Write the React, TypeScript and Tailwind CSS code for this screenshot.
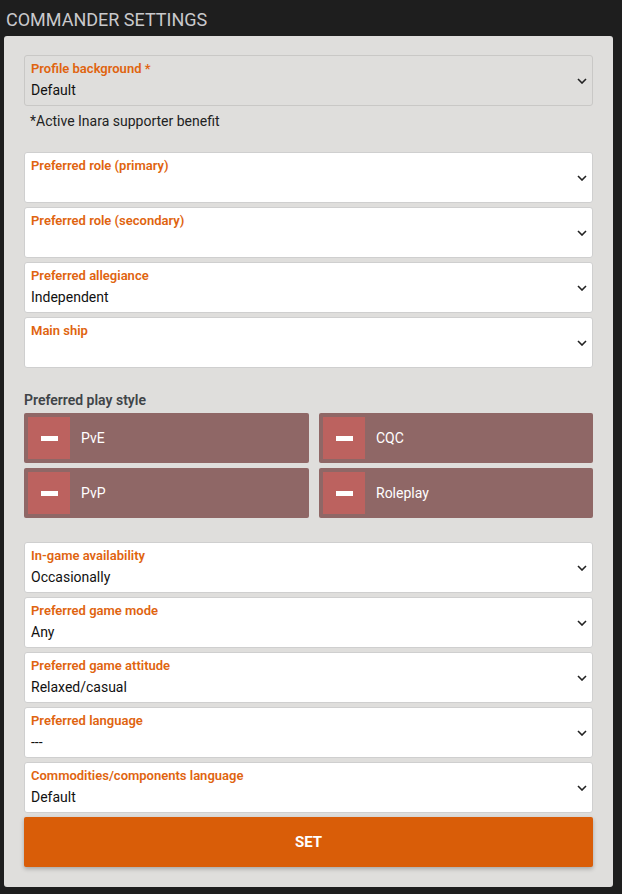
import React from 'react';

const Chevron = () => (
  <svg width="10" height="6" viewBox="0 0 10 6" className="shrink-0">
    <path d="M1 1l4 4 4-4" fill="none" stroke="#222" strokeWidth="1.6" />
  </svg>
);

type FieldProps = { label: string; value?: string; disabled?: boolean };

const SelectField = ({ label, value, disabled }: FieldProps) => (
  <div
    className={`h-[51px] rounded-[3px] border flex items-center pl-[6px] pr-[5px] ${
      disabled ? 'bg-[#dfdedc] border-[#c9c8c6]' : 'bg-white border-[#cfcfcf]'
    }`}
  >
    <div className="flex-1 h-full pt-[4px]">
      <div className="text-[13px] leading-[18px] font-semibold text-[#e0640f]">{label}</div>
      <div className="text-[14px] leading-[22px] text-[#111] mt-[1px]">{value ?? '\u00a0'}</div>
    </div>
    <Chevron />
  </div>
);

const StyleToggle = ({ label }: { label: string }) => (
  <div className="h-[50px] rounded-[2px] bg-[#8f6766] flex items-center pl-[4px]">
    <div className="w-[42px] h-[42px] bg-[#bc625f] flex items-center justify-center">
      <div className="w-[17px] h-[5px] bg-white" />
    </div>
    <span className="ml-[11px] text-[14px] text-white">{label}</span>
  </div>
);

export default function App() {
  const top = [
    { label: 'Preferred role (primary)' },
    { label: 'Preferred role (secondary)' },
    { label: 'Preferred allegiance', value: 'Independent' },
    { label: 'Main ship' },
  ];
  const bottom = [
    { label: 'In-game availability', value: 'Occasionally' },
    { label: 'Preferred game mode', value: 'Any' },
    { label: 'Preferred game attitude', value: 'Relaxed/casual' },
    { label: 'Preferred language', value: '---' },
    { label: 'Commodities/components language', value: 'Default' },
  ];
  return (
    <div
      className="min-h-[894px] bg-[#1e1e1e] pl-[4px] pr-[9px] pb-[6px]"
      style={{ fontFamily: 'Roboto, "Open Sans", sans-serif' }}
    >
      <h1 className="h-[36px] pl-[2px] pt-[9px] text-[18px] leading-[22px] text-[#c9c9cc]">
        COMMANDER SETTINGS
      </h1>
      <div className="bg-[#dfdedc] rounded-[3px] pt-[19px] pb-[20px] px-[20px]">
        <SelectField label="Profile background *" value="Default" disabled />
        <div className="text-[14px] leading-[20px] text-[#222] pl-[6px] mt-[5px]">
          *Active Inara supporter benefit
        </div>
        <div className="mt-[21px] flex flex-col gap-[4px]">
          {top.map((f) => (
            <SelectField key={f.label} {...f} />
          ))}
        </div>
        <div className="mt-[23px] text-[14px] leading-[18px] font-semibold text-[#404448]">
          Preferred play style
        </div>
        <div className="mt-[4px] grid grid-cols-[285px_274px] gap-x-[10px] gap-y-[5px]">
          <StyleToggle label="PvE" />
          <StyleToggle label="CQC" />
          <StyleToggle label="PvP" />
          <StyleToggle label="Roleplay" />
        </div>
        <div className="mt-[24px] flex flex-col gap-[4px]">
          {bottom.map((f) => (
            <SelectField key={f.label} {...f} />
          ))}
          <button className="h-[50px] rounded-[2px] bg-[#d95d08] text-white text-[15px] font-bold shadow-[0_2px_4px_rgba(0,0,0,0.25)]">
            SET
          </button>
        </div>
      </div>
    </div>
  );
}
